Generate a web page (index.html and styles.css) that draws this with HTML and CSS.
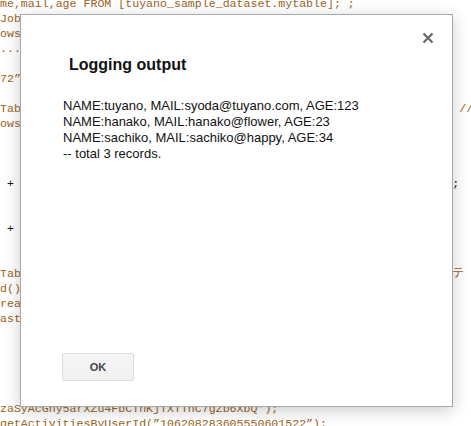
FILE: index.html
```html
<!doctype html>
<html lang="en">
<head>
<meta charset="utf-8">
<title>Logging output</title>
<meta name="viewport" content="width=device-width, initial-scale=1">
<link rel="stylesheet" href="styles.css">
</head>
<body>

<!-- script editor behind the dialog -->
<div class="code">me,mail,age FROM [tuyano_sample_dataset.mytable]; ;
Job = jobs(“106208283605”,    request);
ows = queryResults.rows;
....

72”);

Table = BigQuery.Tables.get(projectId, datasetId, tableId);       // テーブル
ows = table.numRows;



 <span class="op">+</span>  'SELECT name, mail, age FROM [tuyano_sample_dataset.mytable]'<span class="op">;</span>


 <span class="op">+</span> ' ORDER BY age';


TableData.insertAll(rows, projectId, datasetId, tableId);     // テ
d();
rea
ast





zaSyAcGny5arXZu4FbCTnKjTXTTnC7gZb6XbQ”);
getActivitiesByUserId(”106208283605550601522”);</div>

<!-- modal -->
<div class="dialog">
  <button class="close" aria-label="Close">
    <svg width="12" height="12" viewBox="0 0 12 12"><path d="M1.5 1.5L10.5 10.5M10.5 1.5L1.5 10.5" stroke="#6d6d6d" stroke-width="2.4" fill="none"/></svg>
  </button>
  <h2 class="title">Logging output</h2>
  <div class="log">
    NAME:tuyano, MAIL:syoda@tuyano.com, AGE:123<br>
    NAME:hanako, MAIL:hanako@flower, AGE:23<br>
    NAME:sachiko, MAIL:sachiko@happy, AGE:34<br>
    -- total 3 records.
  </div>
  <div class="actions">
    <button class="ok">OK</button>
  </div>
</div>

</body>
</html>
```

FILE: styles.css
```css
:root{
  --c-code:#9a6424;
  --c-border:#a9a9a9;
  --c-text:#111;
}
*{box-sizing:border-box;margin:0;padding:0;}
html,body{overflow:hidden;height:100%;}
body{background:#fff;font-family:"Liberation Sans",Arial,sans-serif;color:var(--c-text);}

.code{
  font-family:"Liberation Mono","Noto Sans CJK JP",monospace;
  font-size:11.6px;
  line-height:15px;
  white-space:pre;
  color:var(--c-code);
  margin-top:-4px;
}
.code .op{color:#111;}

.dialog{
  position:absolute;
  left:20px;top:14px;
  width:433px;height:393px;
  background:#fff;
  border:1px solid var(--c-border);
  box-shadow:0 4px 16px rgb(0 0 0 / .2);
  display:flex;flex-direction:column;
  padding:41px 0 25px;
}
.close{
  position:absolute;top:17px;right:18px;
  width:12px;height:12px;
  border:0;background:none;cursor:pointer;
  display:flex;
}
.title{
  font-size:16px;font-weight:bold;line-height:17px;
  margin-left:48px;
}
.log{
  font-size:13px;line-height:16px;
  margin:25px 0 0 42px;
}
.actions{margin-top:auto;padding-left:41px;}
.ok{
  width:72px;height:28px;
  font-family:"Liberation Sans",Arial,sans-serif;
  font-size:11px;font-weight:bold;color:#444;
  background:linear-gradient(#f5f5f5,#f1f1f1);
  border:1px solid #dcdcdc;border-radius:2px;
  cursor:pointer;
}
```
